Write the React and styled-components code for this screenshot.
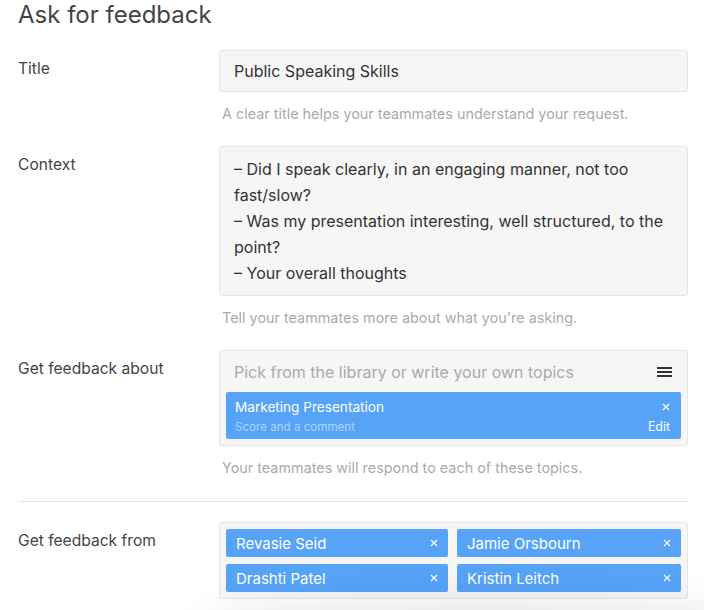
import React from 'react';
import styled, { createGlobalStyle } from 'styled-components';

const GlobalStyle = createGlobalStyle`
  html, body {
    margin: 0;
    padding: 0;
    background: #fff;
    font-family: Inter, 'Liberation Sans', sans-serif;
    color: #444;
    overflow: hidden;
  }
`;

const Page = styled.div`
  width: 670px;
  padding: 0 16px 40px 18px;
`;

const Heading = styled.h1`
  margin: 0 0 21px;
  font-size: 24px;
  line-height: 29px;
  font-weight: 400;
  color: #444;
`;

const Row = styled.div`
  display: grid;
  grid-template-columns: 201px 1fr;
  padding-bottom: ${props => props.pb || '22px'};
`;

const Label = styled.div`
  padding-top: 9px;
  font-size: 15.6px;
  line-height: 20px;
  color: #444;
`;

const Field = styled.div`
  background: #f6f6f6;
  border: 1px solid #e4e4e4;
  border-radius: 3px;
  font-size: 16px;
  line-height: ${props => props.lh || '20px'};
  color: #333;
  padding: ${props => props.pad || '10px 14px'};
`;

const Help = styled.div`
  margin-top: 12px;
  padding-left: 3px;
  font-size: 14.4px;
  line-height: 20px;
  color: #aaa;
`;

const Picker = styled.div`
  background: #f6f6f6;
  border: 1px solid #e4e4e4;
  border-radius: 3px;
  padding: 11px 6px 6px;
`;

const PickerTop = styled.div`
  display: flex;
  align-items: center;
  justify-content: space-between;
  padding: 0 9px 0 8px;
  margin-bottom: 10px;
  font-size: 16px;
  line-height: 20px;
  color: #aaa;
`;

const Topic = styled.div`
  background: #56a3f8;
  border-radius: 2px;
  padding: 6px 11px 3px 9px;
  color: #fff;
`;

const TopicLine = styled.div`
  display: flex;
  justify-content: space-between;
  align-items: center;
  font-size: ${props => props.size || '13.6px'};
  line-height: 18px;
  margin-top: ${props => props.mt || '0'};
`;

const Sub = styled.span`
  color: rgba(255, 255, 255, 0.55);
`;

const Edit = styled.span`
  font-size: 12.4px;
`;

const Divider = styled.hr`
  border: none;
  border-top: 1px solid #e4e4e4;
  margin: 0 0 20px;
`;

const People = styled.div`
  display: grid;
  grid-template-columns: 222px 1fr;
  column-gap: 9px;
  row-gap: 7px;
  background: #f6f6f6;
  border: 1px solid #e4e4e4;
  border-radius: 3px;
  padding: 6px;
`;

const Person = styled.div`
  display: flex;
  align-items: center;
  justify-content: space-between;
  height: 28px;
  padding: 0 10px;
  background: #56a3f8;
  border-radius: 2px;
  color: #fff;
  font-size: 15px;
`;

const FooterShadow = styled.div`
  position: fixed;
  left: 200px;
  right: -60px;
  bottom: -50px;
  height: 50px;
  border-radius: 50%;
  box-shadow: 0 -8px 40px rgba(0, 0, 0, 0.1);
  pointer-events: none;
`;

const Close = () => (
  <svg width="8" height="8" viewBox="0 0 8 8">
    <path d="M1 1L7 7M7 1L1 7" stroke="#fff" strokeWidth="1.2" />
  </svg>
);

const Menu = () => (
  <svg width="15" height="10" viewBox="0 0 15 10">
    <path d="M0 1H15M0 5H15M0 9H15" stroke="#333" strokeWidth="2" />
  </svg>
);

const people = ['Revasie Seid', 'Jamie Orsbourn', 'Drashti Patel', 'Kristin Leitch'];

export default function App() {
  return (
    <>
      <GlobalStyle />
      <Page>
        <Heading>Ask for feedback</Heading>
        <Row>
          <Label>Title</Label>
          <div>
            <Field>Public Speaking Skills</Field>
            <Help>A clear title helps your teammates understand your request.</Help>
          </div>
        </Row>
        <Row>
          <Label>Context</Label>
          <div>
            <Field lh="26px" pad="9px 14px">
              – Did I speak clearly, in an engaging manner, not too fast/slow?
              <br />– Was my presentation interesting, well structured, to the point?
              <br />– Your overall thoughts
            </Field>
            <Help>Tell your teammates more about what you're asking.</Help>
          </div>
        </Row>
        <Row pb="23px">
          <Label>Get feedback about</Label>
          <div>
            <Picker>
              <PickerTop>
                <span>Pick from the library or write your own topics</span>
                <Menu />
              </PickerTop>
              <Topic>
                <TopicLine>
                  <span>Marketing Presentation</span>
                  <Close />
                </TopicLine>
                <TopicLine size="11.6px" mt="2px">
                  <Sub>Score and a comment</Sub>
                  <Edit>Edit</Edit>
                </TopicLine>
              </Topic>
            </Picker>
            <Help>Your teammates will respond to each of these topics.</Help>
          </div>
        </Row>
        <Divider />
        <Row>
          <Label>Get feedback from</Label>
          <People>
            {people.map(name => (
              <Person key={name}>
                <span>{name}</span>
                <Close />
              </Person>
            ))}
          </People>
        </Row>
      </Page>
      <FooterShadow />
    </>
  );
}
